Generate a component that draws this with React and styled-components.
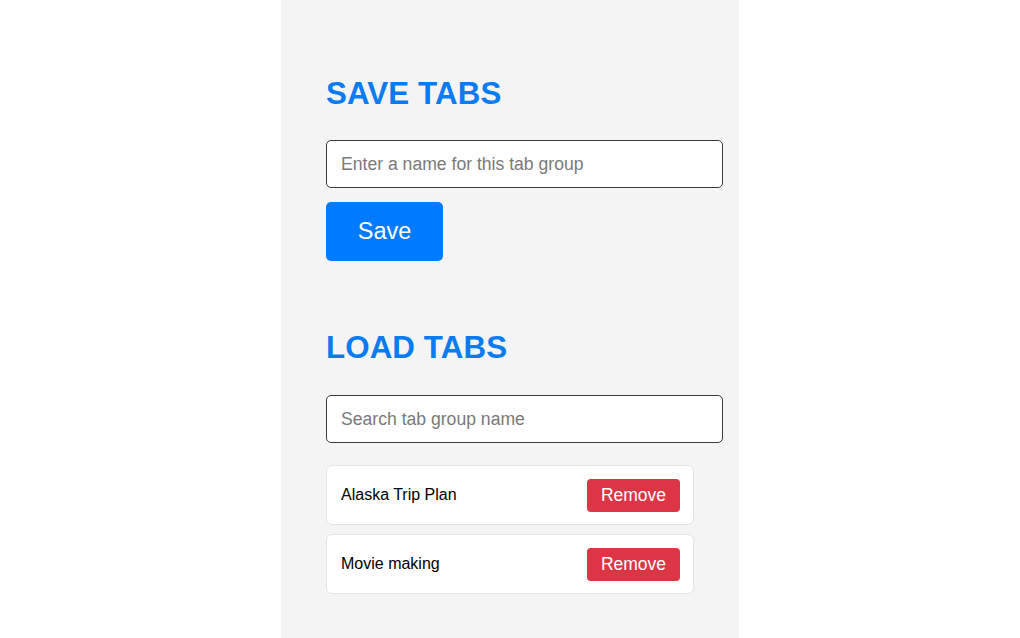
import React from "react";
import styled, { createGlobalStyle } from "styled-components";

const Global = createGlobalStyle`
  html, body { margin: 0; padding: 0; background: #ffffff; }
  body { font-family: "Liberation Sans", Arial, sans-serif; }
  * { box-sizing: border-box; }
`;

const Panel = styled.div`
  width: 458px;
  height: 638px;
  margin: 0 auto;
  background: #f4f4f4;
  padding: 76px 16px 0 45px;
  display: flex;
  flex-direction: column;
`;

const Heading = styled.h2`
  margin: 0 0 ${(p) => p.$gap}px 0;
  font-size: 31.3px;
  line-height: 36px;
  font-weight: 700;
  color: #0a7bf0;
  letter-spacing: 0.1px;
`;

const TextInput = styled.input`
  width: 397px;
  height: 48px;
  border: 1.5px solid #3a3a3a;
  border-radius: 5px;
  background: #fff;
  padding: 0 14px;
  font-family: "Liberation Sans", Arial, sans-serif;
  font-size: 17.6px;
  color: #222;
  outline: none;
  &::placeholder { color: #7a7a7a; }
`;

const SaveButton = styled.button`
  margin-top: 14px;
  width: 117px;
  height: 59px;
  border: none;
  border-radius: 5px;
  background: #007bff;
  color: #fff;
  font-family: "Liberation Sans", Arial, sans-serif;
  font-size: 23.5px;
  cursor: pointer;
`;

const Spacer = styled.div`
  height: ${(p) => p.$h}px;
  flex-shrink: 0;
`;

const List = styled.div`
  margin-top: 22px;
  display: flex;
  flex-direction: column;
  gap: 9px;
`;

const Item = styled.div`
  width: 368px;
  height: 60px;
  background: #fff;
  border: 1px solid #e4e4e4;
  border-radius: 6px;
  display: flex;
  align-items: center;
  justify-content: space-between;
  padding: 0 13px 0 14px;
`;

const ItemName = styled.span`
  font-size: 16px;
  color: #000;
`;

const RemoveButton = styled.button`
  width: 93px;
  height: 33px;
  border: none;
  border-radius: 4px;
  background: #dc3545;
  color: #fff;
  font-family: "Liberation Sans", Arial, sans-serif;
  font-size: 17.5px;
  padding: 0;
  cursor: pointer;
`;

const groups = ["Alaska Trip Plan", "Movie making"];

export default function App() {
  return (
    <>
      <Global />
      <Panel>
        <Heading $gap={28}>SAVE TABS</Heading>
        <TextInput placeholder="Enter a name for this tab group" />
        <SaveButton>Save</SaveButton>
        <Spacer $h={69} />
        <Heading $gap={29}>LOAD TABS</Heading>
        <TextInput placeholder="Search tab group name" />
        <List>
          {groups.map((g) => (
            <Item key={g}>
              <ItemName>{g}</ItemName>
              <RemoveButton>Remove</RemoveButton>
            </Item>
          ))}
        </List>
      </Panel>
    </>
  );
}
